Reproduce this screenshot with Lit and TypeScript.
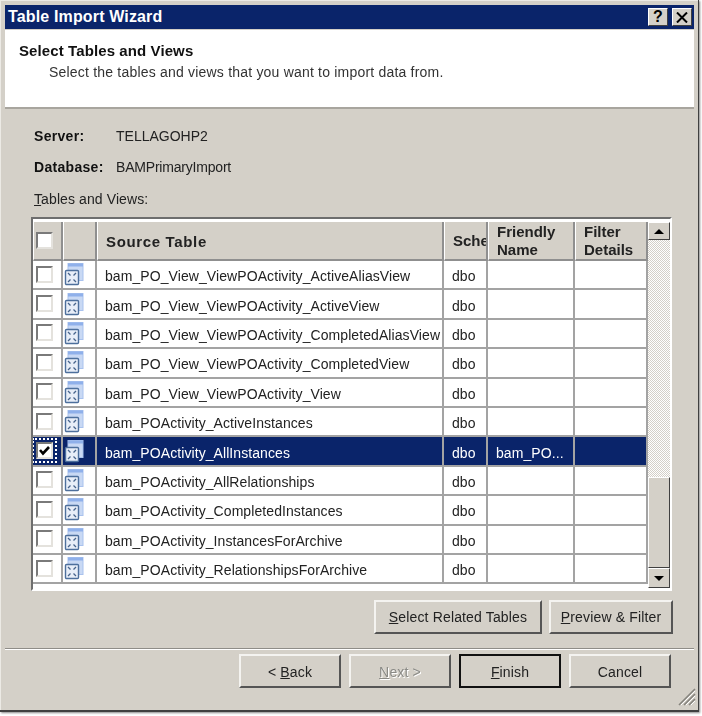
import { LitElement, html, css, svg } from "lit";
import { customElement } from "lit/decorators.js";

const rows = [
  "bam_PO_View_ViewPOActivity_ActiveAliasView",
  "bam_PO_View_ViewPOActivity_ActiveView",
  "bam_PO_View_ViewPOActivity_CompletedAliasView",
  "bam_PO_View_ViewPOActivity_CompletedView",
  "bam_PO_View_ViewPOActivity_View",
  "bam_POActivity_ActiveInstances",
  "bam_POActivity_AllInstances",
  "bam_POActivity_AllRelationships",
  "bam_POActivity_CompletedInstances",
  "bam_POActivity_InstancesForArchive",
  "bam_POActivity_RelationshipsForArchive",
];

const viewIcon = svg`<svg class="ico" width="20" height="23" viewBox="0 0 20 23">
  <rect x="4" y="0.5" width="15" height="17" fill="#c9d9f4" stroke="#a9c2ee" />
  <rect x="4" y="0.5" width="15" height="3" fill="#8fb0ea" />
  <rect x="1.5" y="7.5" width="13" height="14" rx="1" fill="#e8eef8" stroke="#4d6f9c" stroke-width="1.4" />
  <path d="M4 10l2.5 2.5M12 10l-2.5 2.5M4 19l2.5-2.5M12 19l-2.5-2.5" stroke="#47648c" stroke-width="1.3" fill="none" />
</svg>`;

@customElement("app-root")
export class AppRoot extends LitElement {
  static styles = css`
    :host { display: block; width: 702px; height: 716px; background: #fff; font-family: "Liberation Sans", Arial, sans-serif; font-size: 14px; color: #222; overflow: hidden; }
    .win { width: 699px; height: 712px; box-sizing: border-box; background: #d4d0c8; padding: 5px 4px 0 5px; border-right: 1px solid #404040; border-bottom: 2px solid #404040; box-shadow: 1px 1px 2px #888, inset 1px 1px 0 #eceae5; display: flex; flex-direction: column; position: relative; filter: blur(0.4px); }
    .title { height: 24px; flex: none; background: #0a246a; color: #fff; font-weight: bold; font-size: 16px; letter-spacing: 0.15px; display: flex; align-items: center; padding: 0 2px 0 3px; box-sizing: border-box; }
    .title span { flex: 1; }
    .cap { width: 20px; height: 18px; margin-left: 4px; background: #d4d0c8; box-sizing: border-box; border: 1px solid; border-color: #fff #404040 #404040 #fff; color: #000; display: flex; align-items: center; justify-content: center; font-size: 16px; font-weight: bold; }
    .head { height: 77px; flex: none; margin-top: 1px; background: #fff; border-bottom: 2px solid #a8a59e; padding: 0 0 0 14px; }
    .head h1 { margin: 0; padding-top: 13px; font-size: 15px; letter-spacing: 0.1px; line-height: 16px; font-weight: bold; color: #111; }
    .head p { margin: 5px 0 0 30px; line-height: 16px; color: #333; letter-spacing: 0.2px; }
    .info { height: 108px; flex: none; padding-left: 29px; display: flex; flex-direction: column; }
    .line { display: flex; height: 31px; align-items: center; }
    .line b { width: 82px; letter-spacing: 0.3px; color: #111; }
    .info .first { margin-top: 11px; }
    .info .third { height: 33px; letter-spacing: 0.1px; }
    .tight { letter-spacing: -0.2px; }
    .grid { margin-left: 26px; width: 641px; height: 374px; box-sizing: border-box; flex: none; border: 2px solid; border-color: #6e6e6e #fff #fff #6e6e6e; background: #fff; display: flex; }
    .list { width: 615px; flex: none; }
    .cols { display: grid; grid-template-columns: 30px 34px 347px 44px 87px 73px; width: 615px; }
    .hdr { margin-top: 3px; height: 39px; background: #d4d0c8; }
    .hdr > div { box-sizing: border-box; border-right: 2px solid #8f8f8f; border-left: 1px solid #fff; border-bottom: 2px solid #8f8f8f; display: flex; align-items: center; padding: 1px 0 0 8px; font-weight: bold; font-size: 15px; color: #222; line-height: 18px; overflow: hidden; white-space: nowrap; }
    .hdr > div.c0 { padding-left: 2px; padding-top: 0; }
    .hdr > div.src { letter-spacing: 0.65px; padding-top: 2px; }
    .row { height: 29.4px; }
    .row > div { box-sizing: border-box; border-right: 2px solid #a3a3a3; border-bottom: 2px solid #a3a3a3; display: flex; align-items: center; padding: 3px 0 0 8px; white-space: nowrap; overflow: hidden; letter-spacing: 0.08px; }
    .row > div.c0 { padding: 0 0 1px 3px; }
    .row > div.c1 { padding: 0 0 0 1px; }
    .row.sel > div { background: #0a246a; color: #fff; }
    .focus { outline: 2px dotted #fff; outline-offset: 2px; }
    .cb { width: 17px; height: 17px; box-sizing: border-box; background: #fff; border: 2px solid; border-color: #7a7a7a #e4e2dd #e4e2dd #7a7a7a; display: block; }
    .ico { display: block; }
    .bar { width: 22px; flex: none; display: flex; flex-direction: column; margin-top: 3px; height: 366px; }
    .sb { height: 18px; flex: none; background: #d4d0c8; box-sizing: border-box; border: 1px solid; border-color: #fff #404040 #404040 #fff; display: flex; align-items: center; justify-content: center; }
    .track { height: 237px; flex: none; background: repeating-conic-gradient(#fff 0 25%, #d4d0c8 0 50%) 0 0 / 2px 2px; }
    .thumb { flex: 1; background: #d4d0c8; box-sizing: border-box; border: 1px solid; border-color: #fff #404040 #404040 #fff; }
    .down { height: 20px; }
    .tri-u { width: 0; height: 0; border: 5px solid transparent; border-top: 0; border-bottom-color: #000; }
    .tri-d { width: 0; height: 0; border: 5px solid transparent; border-bottom: 0; border-top-color: #000; }
    .btns { display: flex; justify-content: flex-end; gap: 7px; margin: 9px 21px 0 0; height: 34px; flex: none; }
    .btn { box-sizing: border-box; height: 34px; background: #d4d0c8; border: 2px solid; border-color: #f4f3f0 #555 #555 #f4f3f0; display: flex; align-items: center; justify-content: center; color: #222; letter-spacing: 0.15px; }
    .sep { flex: none; margin-top: 14px; height: 2px; background: linear-gradient(#8f8d88 50%, #fff 50%); }
    .nav { display: flex; gap: 8px; margin: 4px 0 0 234px; flex: none; }
    .nav .btn { padding-top: 2px; }
    .w102 { width: 102px; }
    .w168 { width: 168px; }
    .w124 { width: 124px; }
    .dis { color: #8a8a86; text-shadow: 1px 1px 0 #fff; }
    .def { border: 2px solid #111; }
    .grip { position: absolute; right: 2px; bottom: 4px; }
  `;

  render() {
    return html`<div class="win">
      <div class="title"><span>Table Import Wizard</span><div class="cap">?</div><div class="cap"><svg width="12" height="11" viewBox="0 0 12 11"><path d="M1 0.5L11 10.5M11 0.5L1 10.5" stroke="#000" stroke-width="2" fill="none" /></svg></div></div>
      <div class="head">
        <h1>Select Tables and Views</h1>
        <p>Select the tables and views that you want to import data from.</p>
      </div>
      <div class="info">
        <div class="line first"><b>Server:</b><span>TELLAGOHP2</span></div>
        <div class="line"><b>Database:</b><span class="tight">BAMPrimaryImport</span></div>
        <div class="line third"><span><u>T</u>ables and Views:</span></div>
      </div>
      <div class="grid">
        <div class="list">
          <div class="cols hdr">
            <div class="c0"><i class="cb"></i></div>
            <div></div>
            <div class="src">Source Table</div>
            <div>Sche</div>
            <div>Friendly<br />Name</div>
            <div>Filter<br />Details</div>
          </div>
          ${rows.map((r, i) => {
            const sel = i === 6;
            return html`<div class="cols row ${sel ? "sel" : ""}">
              <div class="c0">${sel
                ? html`<i class="cb focus"><svg width="13" height="13" viewBox="0 0 13 13"><path d="M2 6l3 3.5L11 3" fill="none" stroke="#000" stroke-width="2.6" /></svg></i>`
                : html`<i class="cb"></i>`}</div>
              <div class="c1">${viewIcon}</div>
              <div>${r}</div>
              <div>dbo</div>
              <div>${sel ? "bam_PO..." : ""}</div>
              <div></div>
            </div>`;
          })}
        </div>
        <div class="bar">
          <div class="sb"><i class="tri-u"></i></div>
          <div class="track"></div>
          <div class="thumb"></div>
          <div class="sb down"><i class="tri-d"></i></div>
        </div>
      </div>
      <div class="btns">
        <div class="btn w168"><span><u>S</u>elect Related Tables</span></div>
        <div class="btn w124"><span><u>P</u>review &amp; Filter</span></div>
      </div>
      <div class="sep"></div>
      <div class="nav">
        <div class="btn w102"><span>&lt; <u>B</u>ack</span></div>
        <div class="btn w102 dis"><span><u>N</u>ext &gt;</span></div>
        <div class="btn w102 def"><span><u>F</u>inish</span></div>
        <div class="btn w102"><span>Cancel</span></div>
      </div>
      <svg class="grip" width="18" height="18" viewBox="0 0 18 18">
        <path d="M1 17L17 1M6 17L17 6M11 17L17 11" stroke="#85837d" stroke-width="1.6" fill="none" />
        <path d="M3 17L17 3M8 17L17 8M13 17L17 13" stroke="#fff" stroke-width="1" fill="none" />
      </svg>
    </div>`;
  }
}
